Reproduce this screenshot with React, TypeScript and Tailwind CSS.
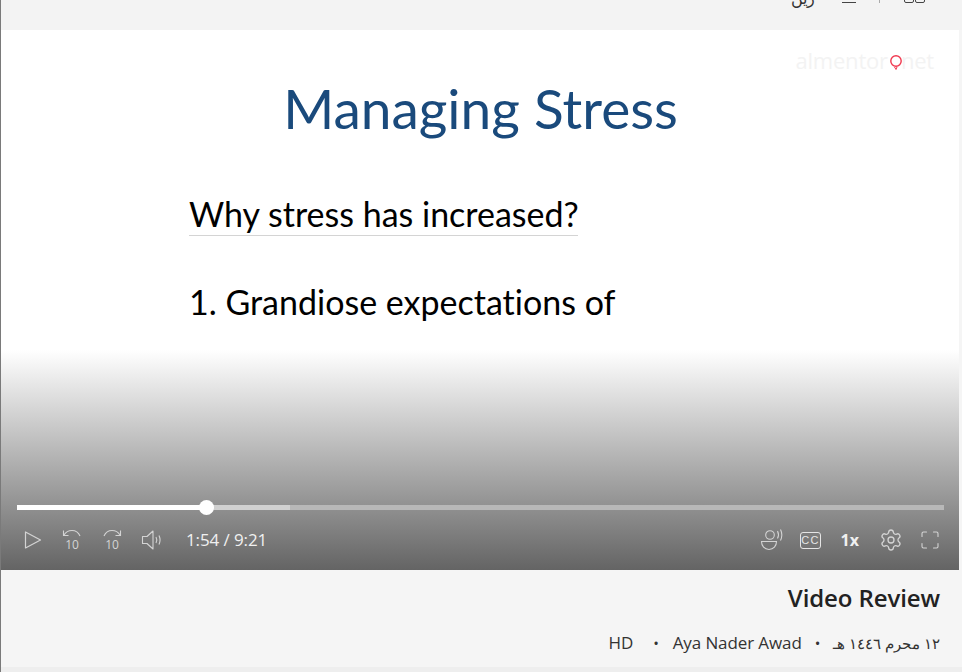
import { Settings } from "lucide-react";

const ctrl = "text-[#d4d4d4]";

function Play() {
  return (
    <svg width="20" height="20" viewBox="0 0 20 20" fill="none" stroke="currentColor" strokeWidth="1.2" strokeLinejoin="round" className={ctrl}>
      <path d="M2.500 2v16l15-8z" />
    </svg>
  );
}

function Seek({ flip }: { flip?: boolean }) {
  return (
    <div className={`relative w-[20px] h-[22px] ${ctrl}`}>
      <svg width="20" height="12" viewBox="0 0 20 12" fill="none" stroke="currentColor" strokeWidth="1.1" className={flip ? "-scale-x-100" : ""}>
        <path d="M2 6C4 2.500 7 1.500 10 1.500c3.500 0 6.500 2 8 5.500" />
        <path d="M1.500 1.500v5h5" />
      </svg>
      <span className="absolute left-0 right-0 top-[9px] text-center text-[12px] leading-[13px] font-['Open_Sans',sans-serif]">10</span>
    </div>
  );
}

function Volume() {
  return (
    <svg width="22" height="22" viewBox="0 0 22 22" fill="none" stroke="currentColor" strokeWidth="1.1" strokeLinejoin="round" className={ctrl}>
      <path d="M1.500 7.500h4.500l6-5.500v18l-6-5.500H1.500z" />
      <path d="M15 8c1 1.800 1 4.200 0 6" />
      <path d="M18 6.500c1.400 3 1.400 6 0 9" />
    </svg>
  );
}

function Voice() {
  return (
    <svg width="24" height="22" viewBox="0 0 24 22" fill="none" stroke="currentColor" strokeWidth="1.1" className={ctrl}>
      <circle cx="10" cy="6" r="4.300" />
      <path d="M1.500 12.500h15c0 4.500-3 8-7.500 8s-7.500-3.500-7.500-8z" />
      <path d="M17.500 2c1.300 2.500 1.300 5 0 7.500" />
      <path d="M20.500 .5c1.800 3.500 1.800 7 0 11" />
    </svg>
  );
}

function Captions() {
  return (
    <div className="w-[21px] h-[17px] rounded-[3px] border-[1.5px] border-[#e5e5e5] flex items-center justify-center">
      <span className="text-[11px] leading-none tracking-[1.500px] pl-[1px] text-[#e5e5e5] font-['Liberation_Sans',sans-serif]">CC</span>
    </div>
  );
}

function Fullscreen() {
  return (
    <svg width="20" height="20" viewBox="0 0 20 20" fill="none" stroke="currentColor" strokeWidth="1.1" strokeLinecap="round" className={ctrl}>
      <path d="M2 6.500V3.500a1.500 1.500 0 0 1 1.500-1.500h3M13.500 2h3A1.500 1.500 0 0 1 18 3.500v3M18 13.500v3a1.500 1.500 0 0 1-1.500 1.500h-3M6.500 18h-3A1.500 1.500 0 0 1 2 16.500v-3" />
    </svg>
  );
}

function Player() {
  return (
    <div className="relative h-[540px] bg-white overflow-hidden">
      {/* slide */}
      <div className="absolute right-[25px] top-[16px] text-[22px] leading-[28px] tracking-[-0.2px] text-[#f3f3f3] font-['Open_Sans',sans-serif]">
        almentor<span className="text-transparent">o</span>net
      </div>
      <svg width="14" height="16" viewBox="0 0 14 16" fill="none" className="absolute left-[888px] top-[24px]">
        <circle cx="7" cy="7" r="5.200" stroke="#f0384f" strokeWidth="1.400" />
        <path d="M5.500 13l1.500 2.500 1-2.500" stroke="#f0384f" strokeWidth="1" />
      </svg>
      <div className="absolute left-0 right-0 top-[46px] pl-[1px] text-center text-[55px] leading-[64px] text-[#1a4a7c] font-['Lato',sans-serif]">
        Managing Stress
      </div>
      <div className="absolute left-[188px] top-[163px] w-[389px] border-b border-[#d4d4d4] text-[34px] leading-[42px] whitespace-nowrap [font-variant-ligatures:none] text-black font-['Lato',sans-serif]">
        Why stress has increased?
      </div>
      <div className="absolute left-[188px] top-[251px] text-[34px] leading-[42px] whitespace-nowrap [font-variant-ligatures:none] text-black font-['Lato',sans-serif]">
        1. Grandiose expectations of
      </div>

      {/* controls */}
      <div className="absolute inset-x-0 bottom-0 h-[220px] bg-gradient-to-b from-transparent to-[#646464] flex flex-col justify-end">
        <div className="relative ml-[16px] mr-[15px] h-[5px] bg-[#b8b8b8] mb-[9px]">
          <div className="absolute inset-y-0 left-0 w-[273px] bg-[#d0d0d0]" />
          <div className="absolute inset-y-0 left-0 w-[189px] bg-white" />
          <div className="absolute left-[182px] top-[-5px] w-[15px] h-[15px] rounded-full bg-white" />
        </div>
        <div className="flex items-center justify-between h-[42px] pl-[22px] pr-[19px] mb-[9px]">
          <div className="flex items-center">
            <Play />
            <div className="ml-[19px]"><Seek /></div>
            <div className="ml-[20px]"><Seek flip /></div>
            <div className="ml-[19px]"><Volume /></div>
            <span className="ml-[23px] text-[17px] tracking-[-0.1px] text-[#f0f0f0] font-['Open_Sans',sans-serif]">1:54 / 9:21</span>
          </div>
          <div className="flex items-center">
            <Voice />
            <div className="ml-[16px]"><Captions /></div>
            <span className="ml-[20px] text-[16px] font-bold text-[#f0f0f0] font-['Open_Sans',sans-serif]">1x</span>
            <Settings className={`ml-[20px] w-[24px] h-[24px] ${ctrl}`} strokeWidth={1.3} />
            <div className="ml-[17px]"><Fullscreen /></div>
          </div>
        </div>
      </div>
    </div>
  );
}

export default function App() {
  return (
    <div dir="ltr" className="relative w-[962px] h-[672px] overflow-hidden bg-[#f5f5f5] border-l border-[#7a7a7a] font-['Open_Sans',sans-serif]">
      {/* top bar cut off by the scroll */}
      <div className="h-[30px] relative bg-[#f3f3f3]">
        <div className="absolute left-[790px] top-[-14px] text-[16px] text-[#333]">رين</div>
        <div className="absolute left-[841px] top-[2px] w-[14px] h-[1px] bg-[#444]" />
        <div className="absolute left-[878px] top-0 w-[1px] h-[3px] bg-[#aaa]" />
        <div className="absolute left-[903px] top-[-6px] w-[10px] h-[9px] border border-[#444] rounded-[2px]" />
        <div className="absolute left-[914px] top-[-6px] w-[10px] h-[9px] border border-[#444] rounded-[2px]" />
      </div>
      <div className="mr-[3px]"><Player /></div>
      <div className="flex flex-col items-end pr-[22px] text-[#222]">
        <div className="mt-[11px] text-[24px] leading-[34px] font-semibold tracking-[-0.1px]">Video Review</div>
        <div className="mt-[16px] flex items-center text-[17px] leading-[24px] tracking-[-0.1px] text-[#333]">
          <span>HD</span>
          <span className="ml-[20px] text-[15px]">•</span>
          <span className="ml-[14px]">Aya Nader Awad</span>
          <span className="ml-[13px] text-[15px]">•</span>
          <span className="ml-[13px] text-[15px] font-['Noto_Sans',sans-serif]" dir="rtl">١٢ محرم ١٤٤٦ هـ</span>
        </div>
      </div>
      <div className="absolute left-0 right-0 bottom-0 h-[5px] bg-[#eeeeee]" />
    </div>
  );
}
